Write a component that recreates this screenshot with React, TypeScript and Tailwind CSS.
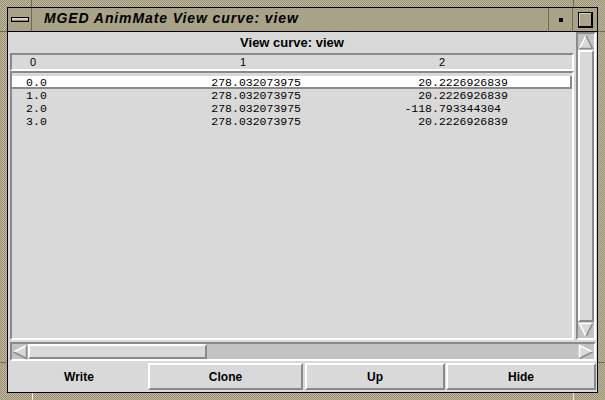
import React from 'react';

const rows = [
  ['0.0', '278.032073975', '20.2226926839'],
  ['1.0', '278.032073975', '20.2226926839'],
  ['2.0', '278.032073975', '-118.793344304'],
  ['3.0', '278.032073975', '20.2226926839'],
];

// number split on the point so columns line up on it, like the Tk list does
function Num({ value, intWidth }: { value: string; intWidth: string }) {
  const dot = value.indexOf('.');
  return (
    <span className="flex whitespace-pre">
      <span className={`${intWidth} inline-block text-right`}>{value.slice(0, dot)}</span>
      <span>{value.slice(dot)}</span>
    </span>
  );
}

function Arrow({ dir }: { dir: 'up' | 'down' | 'left' | 'right' }) {
  const light = '#ffffff';
  const dark = '#8a8a8a';
  return (
    <svg width="16" height="16" viewBox="0 0 16 16" className="block">
      {dir === 'up' && (
        <>
          <polygon points="8,1.5 1.5,14.5 14.5,14.5" fill="#d9d9d9" />
          <polyline points="1.5,14.5 8,1.5" stroke={light} strokeWidth="1.5" fill="none" />
          <polyline points="8,1.5 14.5,14.5 1.5,14.5" stroke={dark} strokeWidth="1.5" fill="none" />
        </>
      )}
      {dir === 'down' && (
        <>
          <polygon points="1.5,1.5 14.5,1.5 8,14.5" fill="#d9d9d9" />
          <polyline points="8,14.5 1.5,1.5 14.5,1.5" stroke={light} strokeWidth="1.5" fill="none" />
          <polyline points="14.5,1.5 8,14.5" stroke={dark} strokeWidth="1.5" fill="none" />
        </>
      )}
      {dir === 'left' && (
        <>
          <polygon points="1.5,8 14.5,1.5 14.5,14.5" fill="#d9d9d9" />
          <polyline points="1.5,8 14.5,1.5" stroke={light} strokeWidth="1.5" fill="none" />
          <polyline points="14.5,1.5 14.5,14.5 1.5,8" stroke={dark} strokeWidth="1.5" fill="none" />
        </>
      )}
      {dir === 'right' && (
        <>
          <polygon points="14.5,8 1.5,1.5 1.5,14.5" fill="#d9d9d9" />
          <polyline points="1.5,14.5 1.5,1.5 14.5,8" stroke={light} strokeWidth="1.5" fill="none" />
          <polyline points="14.5,8 1.5,14.5" stroke={dark} strokeWidth="1.5" fill="none" />
        </>
      )}
    </svg>
  );
}

export default function App() {
  return (
    <div className="relative w-[605px] h-[400px] p-[7px] bg-[repeating-conic-gradient(#bdb699_0_25%,#9a937a_0_50%)] bg-[length:2px_2px] font-['Liberation_Sans',Arial,sans-serif] text-black">
      {/* resize-handle notches in the frame */}
      <div className="absolute left-[31px] top-0 h-[7px] w-px bg-[#6f6a58]" />
      <div className="absolute left-[573px] top-0 h-[7px] w-px bg-[#6f6a58]" />
      <div className="absolute left-[32px] bottom-0 h-[7px] w-px bg-[#f2eee0]" />
      <div className="absolute left-[573px] bottom-0 h-[7px] w-px bg-[#f2eee0]" />
      <div className="absolute left-0 top-[31px] w-[7px] h-px bg-[#6f6a58]" />
      <div className="absolute left-0 top-[362px] w-[7px] h-px bg-[#6f6a58]" />
      <div className="absolute right-0 top-[31px] w-[7px] h-px bg-[#6f6a58]" />
      <div className="absolute right-0 top-[362px] w-[7px] h-px bg-[#6f6a58]" />

      <div className="h-full flex flex-col border border-black bg-[#d9d9d9]">
        {/* title bar */}
        <div className="h-[24px] flex border-b border-black bg-[#a8a286]">
          <div className="w-[24px] flex items-center justify-center border-r border-[#6f6a58]">
            <div className="w-[18px] h-[5px] border border-black bg-[#d8d2b8] shadow-[inset_0_-1px_0_#8d876f]" />
          </div>
          <div className="flex-1 flex items-center pb-[3px] pl-[12px] italic font-bold text-[14px] tracking-[0.9px] whitespace-pre">
            MGED AnimMate View curve: view
          </div>
          <div className="w-[25px] flex items-center justify-center border-l border-r border-[#6f6a58]">
            <div className="w-[4px] h-[4px] bg-black" />
          </div>
          <div className="w-[24px] flex items-center justify-center">
            <div className="w-[15px] h-[16px] border border-black border-r-2 border-b-2 bg-[#aaa489] shadow-[inset_1px_1px_0_#d6d0b6]" />
          </div>
        </div>

        {/* client area */}
        <div className="flex-1 flex flex-col pl-[2px] pr-[1px] pb-[2px]">
          <div className="h-[308px] flex gap-[2px]">
            <div className="w-[564px] flex flex-col">
              <div className="h-[21px] leading-[21px] text-center font-bold text-[13px]">View curve: view</div>
              <div className="h-[18px] flex border-2 border-t-[#8a8a8a] border-l-[#8a8a8a] border-b-white border-r-white text-[11px] leading-[14px]">
                <div className="w-[198px] pl-[18px]">0</div>
                <div className="w-[192px] pl-[30px]">1</div>
                <div className="flex-1 pl-[37px]">2</div>
              </div>
              <div className="flex-1 border-2 border-t-[#8a8a8a] border-l-[#8a8a8a] border-b-white border-r-white pt-[3px] font-['Liberation_Mono','Courier_New',monospace] text-[11.5px]">
                {rows.map((r, i) => (
                  <div
                    key={i}
                    className={`h-[13px] leading-[13px] flex ${i === 0 ? 'bg-white shadow-[inset_-2px_-2px_0_#8a8a8a]' : ''}`}
                  >
                    <div className="w-[198px]"><Num value={r[0]} intWidth="w-[21px]" /></div>
                    <div className="w-[192px]"><Num value={r[1]} intWidth="w-[22px]" /></div>
                    <div className="flex-1"><Num value={r[2]} intWidth="w-[30px]" /></div>
                  </div>
                ))}
              </div>
            </div>

            {/* vertical scrollbar */}
            <div className="w-[20px] flex flex-col border-2 border-t-[#8a8a8a] border-l-[#8a8a8a] border-b-white border-r-white bg-[#c3c3c3]">
              <Arrow dir="up" />
              <div className="flex-1 border-2 border-t-white border-l-white border-b-[#8a8a8a] border-r-[#8a8a8a] bg-[#d9d9d9]" />
              <Arrow dir="down" />
            </div>
          </div>

          {/* horizontal scrollbar */}
          <div className="mt-[2px] h-[19px] w-[586px] flex border-2 border-t-[#8a8a8a] border-l-[#8a8a8a] border-b-white border-r-white bg-[#c3c3c3]">
            <Arrow dir="left" />
            <div className="w-[179px] border-2 border-t-white border-l-white border-b-[#8a8a8a] border-r-[#8a8a8a] bg-[#d9d9d9]" />
            <div className="flex-1" />
            <Arrow dir="right" />
          </div>

          {/* buttons */}
          <div className="mt-[2px] h-[27px] flex font-bold text-[12px]">
            <div className="w-[138px] flex items-center justify-center">Write</div>
            <div className="w-[155px] flex items-center justify-center border-2 border-t-white border-l-white border-b-[#8a8a8a] border-r-[#8a8a8a]">Clone</div>
            <div className="w-[140px] ml-[2px] flex items-center justify-center border-2 border-t-white border-l-white border-b-[#8a8a8a] border-r-[#8a8a8a]">Up</div>
            <div className="w-[150px] ml-[1px] flex items-center justify-center border-2 border-t-white border-l-white border-b-[#8a8a8a] border-r-[#8a8a8a]">Hide</div>
          </div>
        </div>
      </div>
    </div>
  );
}
